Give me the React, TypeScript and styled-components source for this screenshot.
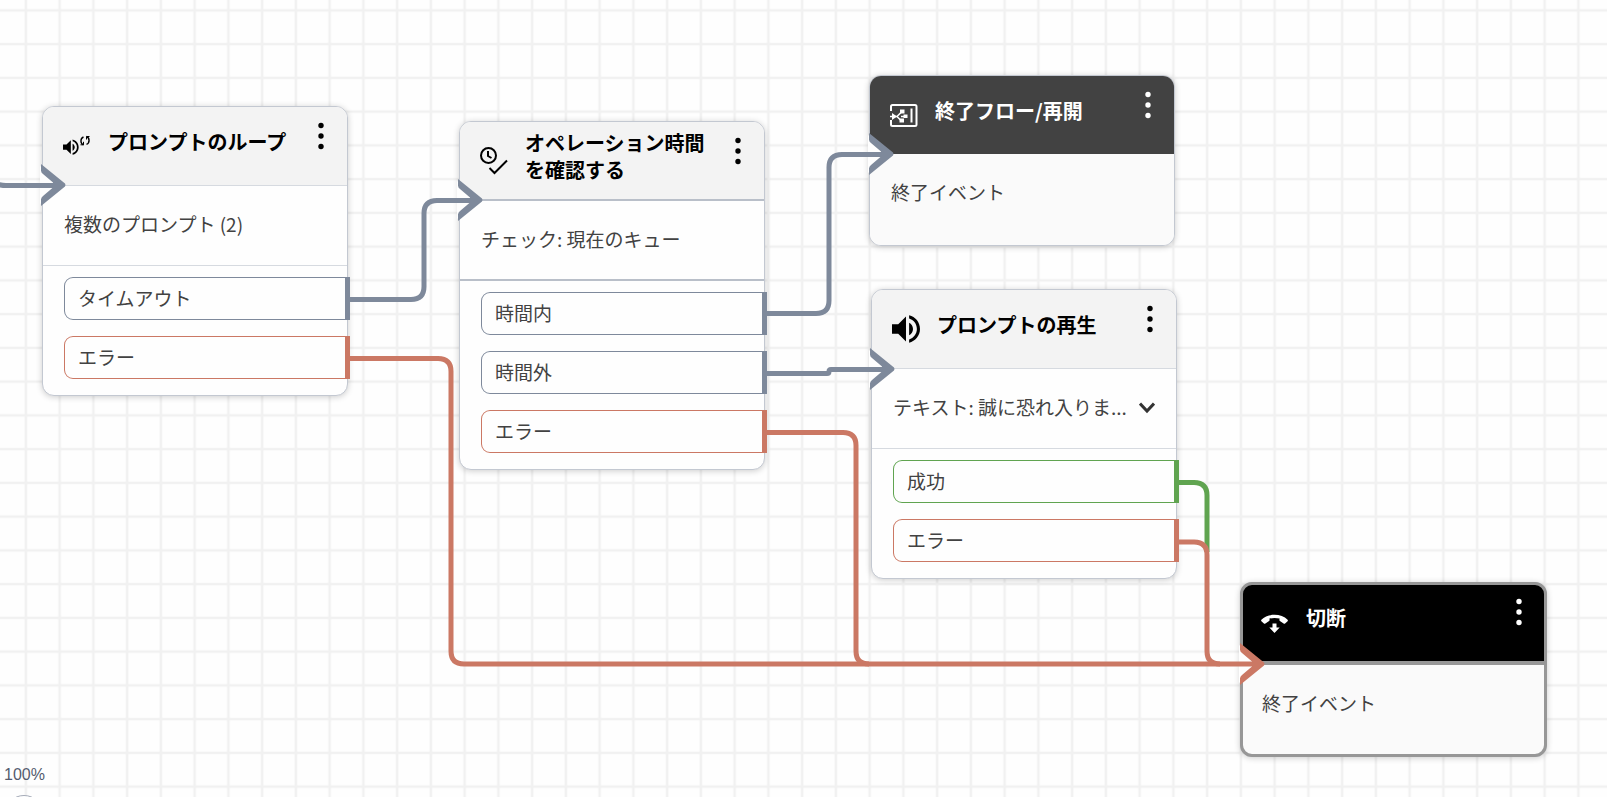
import React from "react";
import styled, { createGlobalStyle, css } from "styled-components";

const SLATE = "#7e899b";
const RED = "#cb7864";
const GREEN = "#60a450";

type Tone = "slate" | "red" | "green";
const tones: Record<Tone, string> = { slate: SLATE, red: RED, green: GREEN };

const GlobalStyle = createGlobalStyle`
  * { box-sizing: border-box; }
  body {
    margin: 0;
    background: #fefefe;
    font-family: "Noto Sans CJK JP", "Noto Sans", sans-serif;
  }
`;

const Canvas = styled.main`
  position: relative;
  width: 100%;
  height: 100vh;
  overflow: hidden;
`;

const Grid = styled.svg`
  position: absolute;
  inset: 0;
  width: 100%;
  height: 100%;
`;

const Wires = styled.svg`
  position: absolute;
  left: 0;
  top: 0;
  width: 100%;
  height: 100%;
  overflow: visible;
  pointer-events: none;
`;

const Card = styled.article<{ $x: number; $y: number; $selected?: boolean }>`
  position: absolute;
  left: ${(p) => p.$x}px;
  top: ${(p) => p.$y}px;
  width: ${(p) => (p.$selected ? 307 : 306)}px;
  border: 1px solid #c3c8d1;
  border-radius: 12px;
  background: #fefefe;
  box-shadow: 0 1px 6px rgba(0, 0, 0, 0.2);
  ${(p) =>
    p.$selected &&
    css`
      &::after {
        content: "";
        position: absolute;
        inset: -1px;
        border: 3px solid #979797;
        border-radius: 12px;
        pointer-events: none;
      }
    `}
`;

type HeadKind = "light" | "dark" | "black";
const headColors: Record<HeadKind, string> = { light: "#f3f3f3", dark: "#424242", black: "#000" };
const headHeights: Record<HeadKind, number> = { light: 79, dark: 78, black: 82 };

const Header = styled.header<{ $kind: HeadKind; $line: string; $lineWidth: number }>`
  display: flex;
  align-items: flex-start;
  height: ${(p) => headHeights[p.$kind]}px;
  padding-left: 20px;
  border-radius: 11px 11px 0 0;
  border-bottom: ${(p) => p.$lineWidth}px solid ${(p) => p.$line};
  background: ${(p) => headColors[p.$kind]};
  color: ${(p) => (p.$kind === "light" ? "#000" : "#fff")};
`;

const IconSlot = styled.span`
  flex: none;
  width: 28px;
  height: 28px;
  margin: 25px 17px 0 0;
  svg { display: block; overflow: visible; }
`;

const Title = styled.h2`
  display: flex;
  align-items: center;
  width: 190px;
  height: 68px;
  margin: 0;
  font-size: 20px;
  line-height: 27px;
  font-weight: 700;
`;

const IconButton = styled.button`
  display: flex;
  align-items: center;
  justify-content: center;
  flex: none;
  padding: 0;
  border: 0;
  background: none;
  color: inherit;
  cursor: pointer;
`;

const MenuButton = styled(IconButton)`
  width: 24px;
  height: 40px;
  margin: 9px 0 0 11px;
`;

const Body = styled.div<{ $tint?: boolean; $line?: string; $lineWidth?: number }>`
  display: flex;
  align-items: flex-start;
  height: 80px;
  padding: 23px 21px 0;
  border-bottom: ${(p) => p.$lineWidth ?? 0}px solid ${(p) => p.$line ?? "transparent"};
  color: #424242;
  font-size: 19px;
  line-height: 29px;
  ${(p) =>
    p.$tint &&
    css`
      height: 91px;
      background: #fafafa;
      border-radius: 0 0 11px 11px;
    `}
`;

const BodyText = styled.p`
  flex: 1;
  margin: 0;
  white-space: nowrap;
`;

const ExpandButton = styled(IconButton)`
  height: 32px;
`;

const Outputs = styled.ul`
  display: flex;
  flex-direction: column;
  gap: 16px;
  margin: 0;
  padding: 11px 0 16px 21px;
  list-style: none;
`;

const Output = styled.li<{ $tone: Tone }>`
  height: 43px;
  margin-right: -3px;
  padding-left: 13px;
  border: 1px solid ${(p) => tones[p.$tone]};
  border-right-width: 5px;
  border-radius: 9px 0 0 9px;
  background: #fefefe;
  color: #424242;
  font-size: 19px;
  line-height: 39px;
`;

const ZoomControls = styled.div`
  position: absolute;
  left: 4px;
  bottom: -38px;
  display: flex;
  flex-direction: column;
  align-items: center;
  gap: 10px;
  color: #545b6e;
  font: 16px/20px "Liberation Sans", sans-serif;
`;

const ZoomButton = styled.button`
  width: 40px;
  height: 40px;
  border: 1px solid #a5abb8;
  border-radius: 50%;
  background: #fff;
  color: inherit;
  font: inherit;
`;

const SPEAKER =
  "M3 9v6h4l5 5V4L7 9H3zm13.5 3c0-1.77-1.02-3.29-2.5-4.03v8.05c1.48-.73 2.5-2.25 2.5-4.02zM14 3.23v2.06c2.89.86 5 3.54 5 6.71s-2.11 5.85-5 6.71v2.06c4.01-.91 7-4.49 7-8.77s-2.99-7.86-7-8.77z";

const LoopIcon = () => (
  <svg width="28" height="28" viewBox="0 0 28 28" fill="none">
    <path transform="translate(-2.6 4.7) scale(.87)" fill="currentColor" d={SPEAKER} />
    <g stroke="currentColor" strokeWidth="1.4">
      <path d="M20.500 12.800c-3.400-1.300-3.400-6.500 0-7.800M23.500 4.500c3.400 1.300 3.400 6.500 0 7.800" />
      <path d="M17.500 12.800h3v-3M26.500 4.500h-3v3" strokeWidth="1" />
    </g>
  </svg>
);

const SpeakerIcon = () => (
  <svg width="28" height="28" viewBox="3 3 18 18">
    <path fill="currentColor" d={SPEAKER} />
  </svg>
);

const HoursIcon = () => (
  <svg width="28" height="28" viewBox="0 0 28 28" fill="none" stroke="currentColor" strokeWidth="2">
    <circle cx="8.500" cy="8.500" r="7.500" />
    <path d="M8 4v5l3.500 2M9.500 21l5 5L27 13.500" />
  </svg>
);

const ReturnIcon = () => (
  <svg width="28" height="28" viewBox="0 0 28 28" fill="none" stroke="currentColor" strokeWidth="2">
    <path d="M1 10V5.500Q1 4 2.500 4H25q1.500 0 1.500 1.500v18Q26.500 25 25 25H2.500Q1 25 1 23.500V19" />
    <path d="M21.500 7.500v14" />
    <path d="M0 15.500h7M7 15.500l4-4M7 15.500l4 4M11 15.500h6" strokeWidth="1.600" />
    <g fill="currentColor" stroke="none">
      <path d="M2 12l5 3.500L2 19z" />
      <rect x="10" y="8.500" width="4.500" height="4" />
      <rect x="9.500" y="17.500" width="4.500" height="4" />
      <rect x="13.500" y="13.500" width="4" height="3.500" />
    </g>
  </svg>
);

const HangUpIcon = () => (
  <svg width="28" height="28" viewBox="0 0 28 28" fill="currentColor">
    <path d="M13.500 6.800C8.500 6.800 3.500 8.600.4 11.800q-.6.700 0 1.400l2.500 2.200q.7.600 1.500 0l3.700-2.500q.6-.5.500-1.200l-.2-1.100q5.100-1.300 10.200 0l-.2 1.100q-.1.700.5 1.200l3.700 2.500q.8.600 1.500 0l2.500-2.200q.6-.7 0-1.400C23.500 8.600 18.500 6.800 13.500 6.800z" />
    <path d="M11.500 15.500h4v4h3.200l-5.200 5.500-5.200-5.500h3.200z" />
  </svg>
);

const Dots = () => (
  <svg width="6" height="28" viewBox="0 0 6 28" fill="currentColor">
    <circle cx="3" cy="3.500" r="2.700" />
    <circle cx="3" cy="14" r="2.700" />
    <circle cx="3" cy="24.500" r="2.700" />
  </svg>
);

type NodeProps = {
  x: number;
  y: number;
  title: string;
  icon: React.ReactNode;
  text: string;
  kind?: HeadKind;
  selected?: boolean;
  expandable?: boolean;
  line?: string;
  lineWidth?: number;
  outputs?: [string, Tone][];
};

const FlowNode = ({
  x, y, title, icon, text, kind = "light", selected, expandable, line = "#d6dae0", lineWidth = 1, outputs,
}: NodeProps) => (
  <Card $x={x} $y={y} $selected={selected}>
    <Header $kind={kind} $line={line} $lineWidth={lineWidth}>
      <IconSlot>{icon}</IconSlot>
      <Title>{title}</Title>
      <MenuButton aria-label="メニュー"><Dots /></MenuButton>
    </Header>
    <Body $tint={!outputs} $line={line} $lineWidth={outputs ? lineWidth : 0}>
      <BodyText>{text}</BodyText>
      {expandable && (
        <ExpandButton aria-label="展開">
          <svg width="16" height="12" viewBox="0 0 16 12" fill="none" stroke="#333" strokeWidth="3">
            <path d="M1 1.500l7 7.500 7-7.500" />
          </svg>
        </ExpandButton>
      )}
    </Body>
    {outputs && (
      <Outputs>
        {outputs.map(([label, tone]) => (
          <Output key={label} $tone={tone}>{label}</Output>
        ))}
      </Outputs>
    )}
  </Card>
);

const Arrow = ({ x, y, color }: { x: number; y: number; color: string }) => (
  <g transform={`translate(${x} ${y})`}>
    <path fill="#fefefe" d="M-25-19L-2 0-25 19z" />
    <path
      fill={color}
      d="M-24-21L0-1.500Q1 0 0 1.500L-24 21V14.500q0-2 2-3.500L-12 2.500v-5L-22-11q-2-1.500-2-3.500z"
    />
  </g>
);

const Wire = styled.path<{ $tone: Tone }>`
  fill: none;
  stroke: ${(p) => tones[p.$tone]};
  stroke-width: 5px;
`;

export default function App() {
  return (
    <>
      <GlobalStyle />
      <Canvas>
        <Grid aria-hidden="true">
          <defs>
            <pattern id="grid" width="30" height="30" patternUnits="userSpaceOnUse" patternTransform="translate(9 -6.500) scale(1.125)">
              <path d="M15 0v30M0 15h30" stroke="#f1f1f1" strokeWidth="2.300" />
            </pattern>
          </defs>
          <rect width="100%" height="100%" fill="url(#grid)" />
        </Grid>

        <FlowNode x={42} y={106} title="プロンプトのループ" icon={<LoopIcon />} text="複数のプロンプト (2)"
          outputs={[["タイムアウト", "slate"], ["エラー", "red"]]} />
        <FlowNode x={459} y={121} title="オペレーション時間を確認する" icon={<HoursIcon />} text="チェック: 現在のキュー"
          line="#b9bfc9" lineWidth={2}
          outputs={[["時間内", "slate"], ["時間外", "slate"], ["エラー", "red"]]} />
        <FlowNode x={869} y={75} kind="dark" lineWidth={0} title="終了フロー/再開" icon={<ReturnIcon />} text="終了イベント" />
        <FlowNode x={871} y={289} title="プロンプトの再生" icon={<SpeakerIcon />} text="テキスト: 誠に恐れ入りま..." expandable
          outputs={[["成功", "green"], ["エラー", "red"]]} />
        <FlowNode x={1240} y={582} kind="black" selected line="#979797" lineWidth={4} title="切断" icon={<HangUpIcon />} text="終了イベント" />

        <Wires aria-hidden="true">
          <Arrow x={65} y={185} color={SLATE} />
          <Arrow x={482} y={200} color={SLATE} />
          <Arrow x={893} y={154} color={SLATE} />
          <Arrow x={894} y={369} color={SLATE} />
          <Arrow x={1264} y={664} color={RED} />
          <Wire $tone="slate" d="M-6 183Q0 185.500 6 185.500H60" />
          <Wire $tone="slate" d="M350 299.500H411Q424 299.500 424 286.500V213.500Q424 200.500 437 200.500H477" />
          <Wire $tone="slate" d="M767 313.500H816Q829 313.500 829 300.500V167.500Q829 154.500 842 154.500H888" />
          <Wire $tone="slate" d="M767 373.500H827Q829 373.500 829 371.500T831 369.500H889" />
          <Wire $tone="green" d="M1179 482.500H1194Q1207 482.500 1207 495.500V552" />
          <Wire $tone="red" d="M350 358.500H438Q451 358.500 451 371.500V651Q451 664 464 664H1258" />
          <Wire $tone="red" d="M767 432.500H843Q856 432.500 856 445.500V651Q856 664 869 664" />
          <Wire $tone="red" d="M1179 542H1194Q1207 542 1207 555V651Q1207 664 1220 664" />
        </Wires>

        <ZoomControls>
          <span>100%</span>
          <ZoomButton aria-label="ズーム" />
        </ZoomControls>
      </Canvas>
    </>
  );
}
